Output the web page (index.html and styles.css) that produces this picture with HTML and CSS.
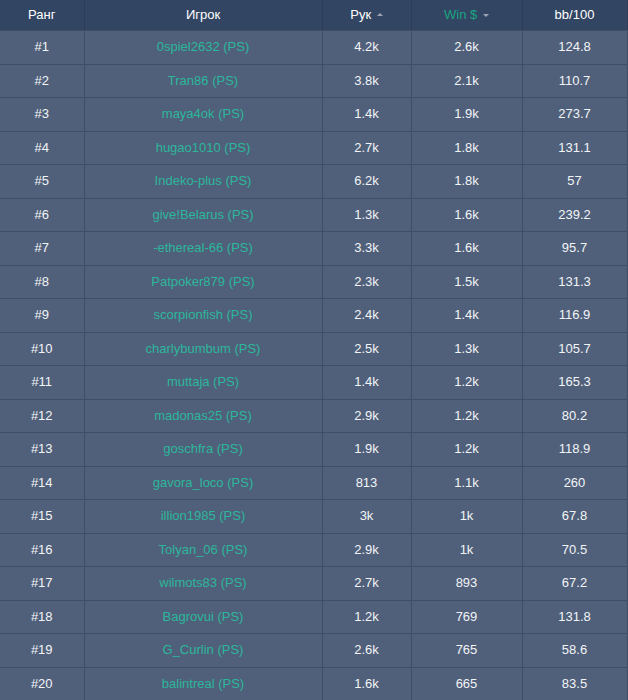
FILE: index.html
```html
<!DOCTYPE html>
<html>
<head>
<meta charset="utf-8">
<link rel="stylesheet" href="styles.css">
</head>
<body>
<table class="rank">
<colgroup>
<col class="c1"><col class="c2"><col class="c3"><col class="c4"><col class="c5">
</colgroup>
<thead>
<tr><th>Ранг</th><th>Игрок</th><th>Рук <span class="arr up"></span></th><th class="active">Win $ <span class="arr down"></span></th><th>bb/100</th></tr>
</thead>
<tbody>
<tr><td>#1</td><td class="name">0spiel2632 (PS)</td><td>4.2k</td><td>2.6k</td><td>124.8</td></tr>
<tr><td>#2</td><td class="name">Tran86 (PS)</td><td>3.8k</td><td>2.1k</td><td>110.7</td></tr>
<tr><td>#3</td><td class="name">maya4ok (PS)</td><td>1.4k</td><td>1.9k</td><td>273.7</td></tr>
<tr><td>#4</td><td class="name">hugao1010 (PS)</td><td>2.7k</td><td>1.8k</td><td>131.1</td></tr>
<tr><td>#5</td><td class="name">Indeko-plus (PS)</td><td>6.2k</td><td>1.8k</td><td>57</td></tr>
<tr><td>#6</td><td class="name">give!Belarus (PS)</td><td>1.3k</td><td>1.6k</td><td>239.2</td></tr>
<tr><td>#7</td><td class="name">-ethereal-66 (PS)</td><td>3.3k</td><td>1.6k</td><td>95.7</td></tr>
<tr><td>#8</td><td class="name">Patpoker879 (PS)</td><td>2.3k</td><td>1.5k</td><td>131.3</td></tr>
<tr><td>#9</td><td class="name">scorpionfish (PS)</td><td>2.4k</td><td>1.4k</td><td>116.9</td></tr>
<tr><td>#10</td><td class="name">charlybumbum (PS)</td><td>2.5k</td><td>1.3k</td><td>105.7</td></tr>
<tr><td>#11</td><td class="name">muttaja (PS)</td><td>1.4k</td><td>1.2k</td><td>165.3</td></tr>
<tr><td>#12</td><td class="name">madonas25 (PS)</td><td>2.9k</td><td>1.2k</td><td>80.2</td></tr>
<tr><td>#13</td><td class="name">goschfra (PS)</td><td>1.9k</td><td>1.2k</td><td>118.9</td></tr>
<tr><td>#14</td><td class="name">gavora_loco (PS)</td><td>813</td><td>1.1k</td><td>260</td></tr>
<tr><td>#15</td><td class="name">illion1985 (PS)</td><td>3k</td><td>1k</td><td>67.8</td></tr>
<tr><td>#16</td><td class="name">Tolyan_06 (PS)</td><td>2.9k</td><td>1k</td><td>70.5</td></tr>
<tr><td>#17</td><td class="name">wilmots83 (PS)</td><td>2.7k</td><td>893</td><td>67.2</td></tr>
<tr><td>#18</td><td class="name">Bagrovui (PS)</td><td>1.2k</td><td>769</td><td>131.8</td></tr>
<tr><td>#19</td><td class="name">G_Curlin (PS)</td><td>2.6k</td><td>765</td><td>58.6</td></tr>
<tr><td>#20</td><td class="name">balintreal (PS)</td><td>1.6k</td><td>665</td><td>83.5</td></tr>
</tbody>
</table>
</body>
</html>
```
FILE: styles.css
```css
html, body {
  margin: 0;
  padding: 0;
  background: #50607a;
}
.rank {
  border-collapse: collapse;
  table-layout: fixed;
  width: 627px;
  font-family: "Liberation Sans", Arial, sans-serif;
  font-size: 13px;
  color: #f2f4f7;
  background: #50607a;
}
.c1 { width: 84px; }
.c2 { width: 238px; }
.c3 { width: 89px; }
.c4 { width: 111px; }
.c5 { width: 105px; }
.rank th, .rank td {
  border-top: 1px solid #3f4e67;
  border-bottom: 1px solid #3f4e67;
  border-left: 1px solid #3f4e67;
  border-right: 1px solid #3f4e67;
  text-align: center;
  white-space: nowrap;
}
.rank th {
  background: #324563;
  font-weight: normal;
  color: #ffffff;
  padding: 6px 8px;
  line-height: 18px;
  border-top: none;
  border-color: #2c3d58;
  border-bottom-color: #3f4e67;
}
.rank th:first-child, .rank td:first-child { border-left: none; }
.rank td {
  padding: 8px 8px;
  line-height: 16.5px;
}
.rank td.name { color: #2cb79b; }
.rank th.active { color: #1aa481; }
.arr {
  display: inline-block;
  width: 0;
  height: 0;
  border-left: 3.5px solid transparent;
  border-right: 3.5px solid transparent;
  vertical-align: middle;
  margin-left: 2px;
}
.arr.up { border-bottom: 3.5px solid #9aa4b6; position: relative; top: -1px; }
.arr.down { border-top: 3.5px solid #9aa4b6; }
```
